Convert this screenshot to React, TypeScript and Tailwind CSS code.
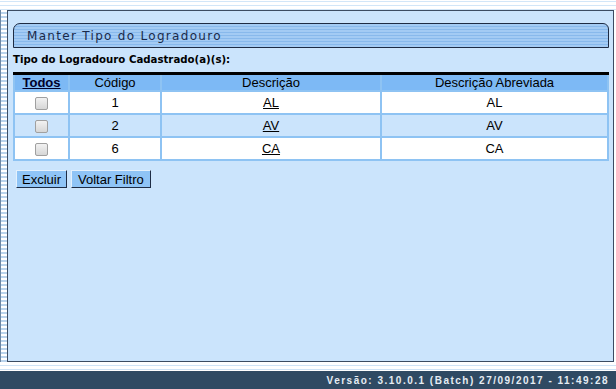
import React from 'react';

const rows = [
  { codigo: '1', descricao: 'AL', abreviada: 'AL' },
  { codigo: '2', descricao: 'AV', abreviada: 'AV' },
  { codigo: '6', descricao: 'CA', abreviada: 'CA' },
];

const Checkbox: React.FC = () => (
  <span className="inline-block w-[13px] h-[13px] rounded-[2px] border border-[#a0a0a0] bg-gradient-to-b from-[#f2f2f2] to-[#d6d6d6] align-middle" />
);

export default function App() {
  return (
    <div className="w-[616px] h-[389px] bg-white flex flex-col overflow-hidden font-['Liberation_Sans',Arial,sans-serif]">
      {/* faixa superior */}
      <div className="h-[10px] bg-[repeating-linear-gradient(to_bottom,#ffffff_0px,#ffffff_1px,#d2e6f8_1px,#d2e6f8_2px,#ffffff_2px,#ffffff_4px)]" />

      <div className="flex flex-1 min-h-0">
        <div className="w-[7px] border-l border-[#6c86a3] bg-[repeating-linear-gradient(to_bottom,#ffffff_0px,#ffffff_2px,#b9d3ec_2px,#b9d3ec_4px)]" />

        <div className="flex-1 flex flex-col bg-[#cbe4fc] border border-[#3c4c62] pl-[5px] pr-[4px] pt-[12px]">
          {/* barra de titulo */}
          <div className="h-[25px] flex items-center pl-[13px] border border-[#1e2c44] rounded-tl-[7px] rounded-tr-[6px] bg-[repeating-linear-gradient(to_bottom,#a3cbf4_0px,#a3cbf4_2px,#88b9ec_2px,#88b9ec_3px)]">
            <span className="text-[12px] tracking-[1.3px] text-[#1a2a4a] font-['DejaVu_Sans',Verdana,sans-serif]">
              Manter Tipo do Logradouro
            </span>
          </div>

          <div className="mt-[4px] h-[16px] flex items-center text-[10.2px] font-bold text-black font-['DejaVu_Sans',Verdana,sans-serif]">
            Tipo do Logradouro Cadastrado(a)(s):
          </div>

          <table className="mt-[4px] w-[596px] border-collapse text-[13px] text-black border-t-[3px] border-t-black">
            <thead>
              <tr className="bg-[#7db9f5] h-[17px]">
                <th className="w-[55px] font-bold underline text-[#00002a] border-2 border-[#8ec3f3] border-t-0 p-0 leading-[15px]">Todos</th>
                <th className="w-[92px] font-normal border-2 border-[#8ec3f3] border-t-0 p-0 leading-[15px]">Código</th>
                <th className="w-[220px] font-normal border-2 border-[#8ec3f3] border-t-0 p-0 leading-[15px]">Descrição</th>
                <th className="font-normal border-2 border-[#8ec3f3] border-t-0 p-0 leading-[15px]">Descrição Abreviada</th>
              </tr>
            </thead>
            <tbody>
              {rows.map((r, i) => (
                <tr key={r.codigo} className={`h-[23px] ${i % 2 === 1 ? 'bg-[#cbe4fc]' : 'bg-white'}`}>
                  <td className="text-center border-2 border-[#8ec3f3] p-0">
                    <Checkbox />
                  </td>
                  <td className="text-center border-2 border-[#8ec3f3] p-0">{r.codigo}</td>
                  <td className="text-center border-2 border-[#8ec3f3] p-0">
                    <span className="underline">{r.descricao}</span>
                  </td>
                  <td className="text-center border-2 border-[#8ec3f3] p-0">{r.abreviada}</td>
                </tr>
              ))}
            </tbody>
          </table>

          <div className="flex gap-[4px] mt-[9px] pl-[3px]">
            <button className="h-[18px] px-[5px] text-[13px] leading-none bg-[#8fc4f6] border border-t-[#e4f1fd] border-l-[#e4f1fd] border-r-[#1e2c44] border-b-[#1e2c44] text-black">
              Excluir
            </button>
            <button className="h-[18px] px-[6px] text-[13px] leading-none bg-[#8fc4f6] border border-t-[#e4f1fd] border-l-[#e4f1fd] border-r-[#1e2c44] border-b-[#1e2c44] text-black">
              Voltar Filtro
            </button>
          </div>
        </div>

        <div className="w-[2px] bg-white" />
      </div>

      {/* faixa inferior */}
      <div className="h-[9px] bg-[repeating-linear-gradient(to_bottom,#ffffff_0px,#ffffff_3px,#cfe3f6_3px,#cfe3f6_4px)]" />
      <div className="h-[18px] bg-[#2f4a63] flex items-center justify-end pr-[7px]">
        <span className="text-[10px] font-bold tracking-[1.5px] text-[#e6edf4] font-['Liberation_Sans',Arial,sans-serif]">
          Versão: 3.10.0.1 (Batch) 27/09/2017 - 11:49:28
        </span>
      </div>
    </div>
  );
}
